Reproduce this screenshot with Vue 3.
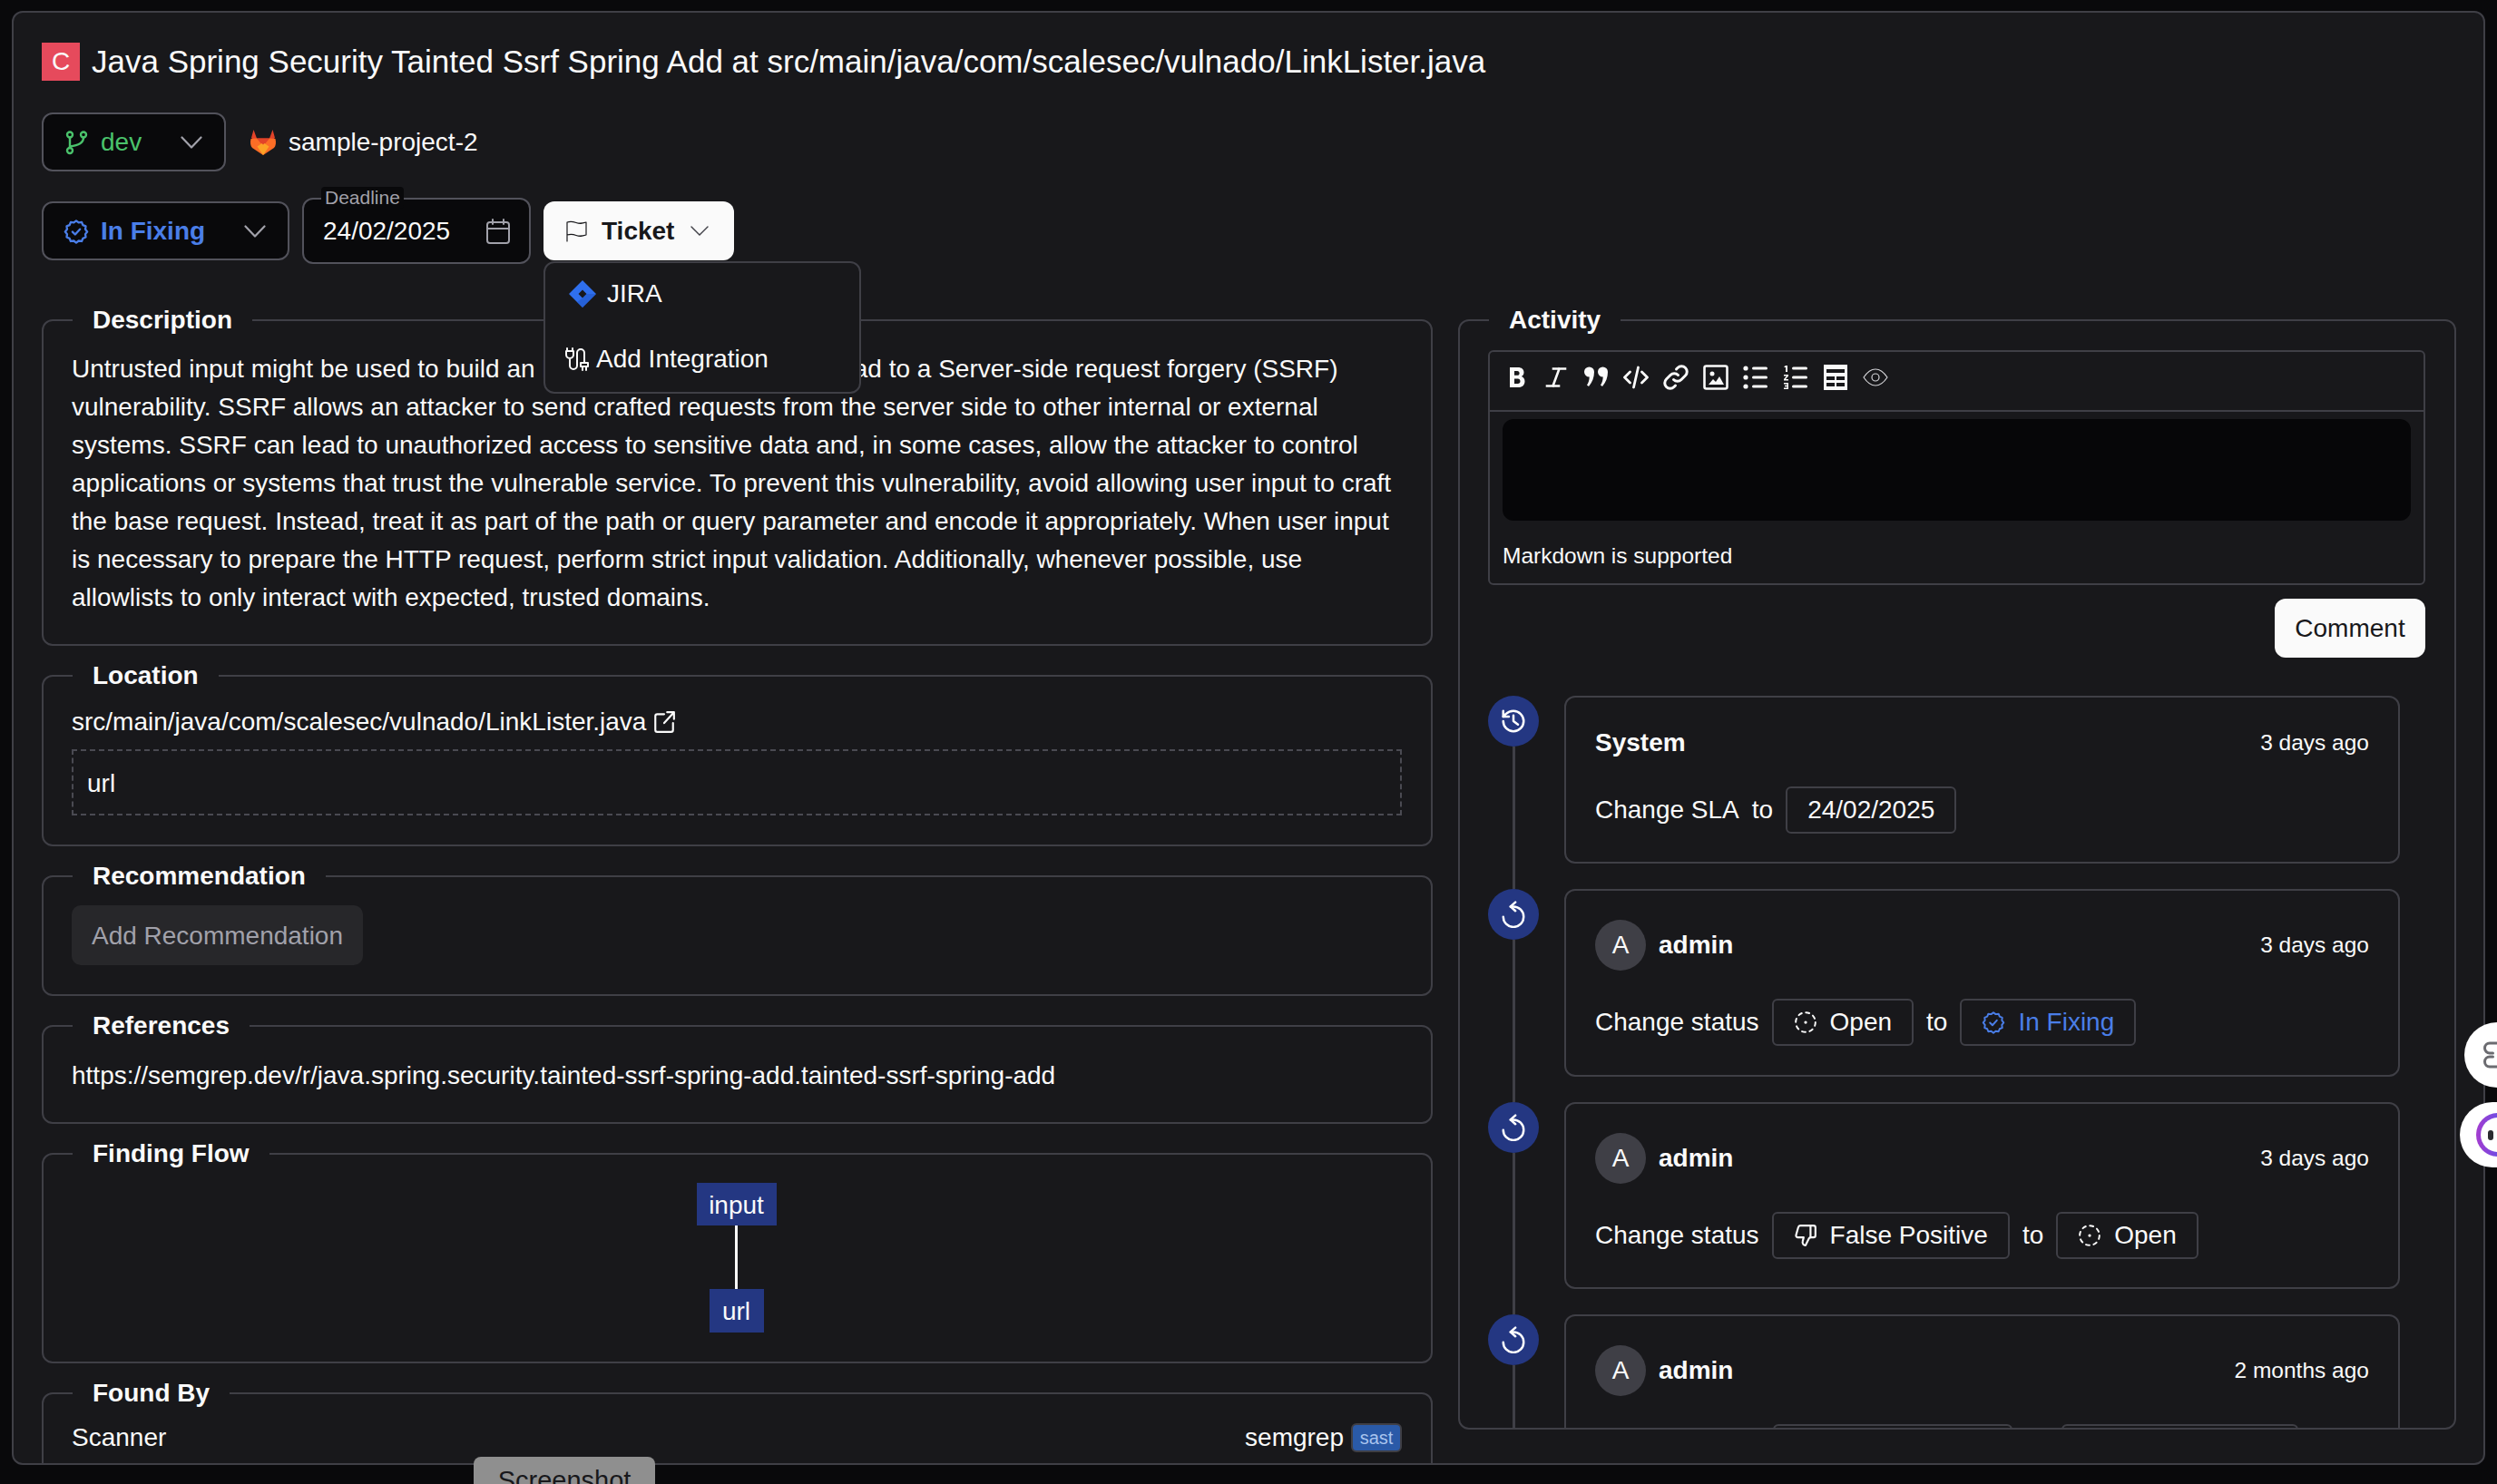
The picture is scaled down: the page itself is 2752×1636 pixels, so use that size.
<template>
  <div class="page">
    <div class="modal">
      <div class="title-row">
        <span class="severity">C</span>
        <h1>Java Spring Security Tainted Ssrf Spring Add at src/main/java/com/scalesec/vulnado/LinkLister.java</h1>
      </div>

      <div class="branch-row">
        <div class="select branch-select">
          <svg class="ico-md" viewBox="0 0 28 28" fill="none" stroke="#4ac26b" stroke-width="2.400" stroke-linecap="round" stroke-linejoin="round"><circle cx="7" cy="5.500" r="3"/><circle cx="22" cy="5.500" r="3"/><circle cx="7" cy="23" r="3"/><path d="M7 8.500V20"/><path d="M22 8.500c0 6-5 8.500-15 10"/></svg>
          <span class="branch-name">dev</span>
          <svg class="chevron" viewBox="0 0 24 14" fill="none" stroke="#a1a1aa" stroke-width="2.200" stroke-linecap="round" stroke-linejoin="round"><path d="m1.500 1.500 10.500 11 10.500-11"/></svg>
        </div>
        <div class="project">
          <svg class="gitlab" viewBox="0 0 30 30"><path fill="#e24329" d="M4.500 1 8 10.500H22L25.500 1 28 10 15 21 2 10Z"/><path fill="#fc6d26" d="M1.500 11 8 10.500 15 19V29L3 21C1 19 .5 15 1.500 11ZM28.500 11 22 10.500 15 19V29L27 21C29 19 29.500 15 28.500 11Z"/><path fill="#fca326" d="M8.500 19.500 15 15 21.500 19.500 15 29Z"/><path fill="#e24329" d="M8 10.500H22L15 17.500Z"/></svg>
          <span>sample-project-2</span>
        </div>
      </div>

      <div class="status-row">
        <div class="select status-select">
          <svg class="ico-md" viewBox="0 0 24 24" fill="none" stroke="#4a7ee8" stroke-width="2" stroke-linecap="round" stroke-linejoin="round"><path :d="badge"/><path d="m8.500 12.500 2.500 2.500 4.500-5"/></svg>
          <strong>In Fixing</strong>
          <svg class="chevron" viewBox="0 0 24 14" fill="none" stroke="#a1a1aa" stroke-width="2.200" stroke-linecap="round" stroke-linejoin="round"><path d="m1.500 1.500 10.500 11 10.500-11"/></svg>
        </div>
        <div class="deadline">
          <span class="deadline-label">Deadline</span>
          <span>24/02/2025</span>
          <svg class="ico-md" viewBox="0 0 28 28" fill="none" stroke="#a1a1aa" stroke-width="2" stroke-linecap="round" stroke-linejoin="round"><rect x="2" y="4" width="24" height="23" rx="3"/><path d="M8 1v5M20 1v5M2 11h24"/></svg>
        </div>
        <div class="ticket-wrap">
          <button type="button" class="ticket">
            <svg class="flag" viewBox="0 0 24 24" fill="none" stroke="#18181b" stroke-width="1.200" stroke-linecap="round" stroke-linejoin="round"><path d="M1 23V2c4-1.500 6-1 10 .5s6 1 11-.5v14c-5 1.500-7 2-11 .5s-6-1.500-10-.5"/></svg>
            <strong>Ticket</strong>
            <svg class="ticket-chevron" viewBox="0 0 20 12" fill="none" stroke="#3f3f46" stroke-width="1.400" stroke-linecap="round"><path d="m1 1 9 9 9-9"/></svg>
          </button>
          <div class="menu">
            <div class="menu-item jira-item">
              <svg class="jira" viewBox="0 0 30 30"><path fill="#2f6fed" d="M15 0 30 15 15 30 0 15ZM15 10.500 10.500 15 15 19.500 19.500 15Z" fill-rule="evenodd"/><path fill="#1f56c7" d="M15 19.500 19.500 15 30 15 15 30 9 24Z" opacity=".55"/></svg>
              <span>JIRA</span>
            </div>
            <div class="menu-item add-item">
              <svg class="plug" viewBox="0 0 26 26" fill="none" stroke="#fafafa" stroke-width="2" stroke-linecap="round" stroke-linejoin="round"><path d="M2 1v3M8 1v3M1 4h8v4a4 4 0 0 1-8 0ZM5 12v8a4 4 0 0 0 8 0V6a4 4 0 0 1 8 0v11"/><path d="M17 17h8v4h-8ZM19 21v4M23 21v4"/></svg>
              <span>Add Integration</span>
            </div>
          </div>
        </div>
      </div>

      <div class="columns">
        <div class="left-col">
          <fieldset class="box desc-box">
            <legend>Description</legend>
            <p>Untrusted input might be used to build an HTTP request, which can lead to a Server-side request forgery (SSRF) vulnerability. SSRF allows an attacker to send crafted requests from the server side to other internal or external systems. SSRF can lead to unauthorized access to sensitive data and, in some cases, allow the attacker to control applications or systems that trust the vulnerable service. To prevent this vulnerability, avoid allowing user input to craft the base request. Instead, treat it as part of the path or query parameter and encode it appropriately. When user input is necessary to prepare the HTTP request, perform strict input validation. Additionally, whenever possible, use allowlists to only interact with expected, trusted domains.</p>
          </fieldset>

          <fieldset class="box">
            <legend>Location</legend>
            <div class="file-link">
              <span>src/main/java/com/scalesec/vulnado/LinkLister.java</span>
              <svg class="ico-sm" viewBox="0 0 24 24" fill="none" stroke="#fafafa" stroke-width="2" stroke-linecap="round" stroke-linejoin="round"><path d="M12 4H5a2 2 0 0 0-2 2v14a2 2 0 0 0 2 2h14a2 2 0 0 0 2-2v-7"/><path d="M12 13 22 2M15 2h7v7"/></svg>
            </div>
            <div class="snippet">url</div>
          </fieldset>

          <fieldset class="box">
            <legend>Recommendation</legend>
            <button type="button" class="muted-btn">Add Recommendation</button>
          </fieldset>

          <fieldset class="box">
            <legend>References</legend>
            <div class="ref-line">https://semgrep.dev/r/java.spring.security.tainted-ssrf-spring-add.tainted-ssrf-spring-add</div>
          </fieldset>

          <fieldset class="box">
            <legend>Finding Flow</legend>
            <div class="flow">
              <span class="flow-node input-node">input</span>
              <span class="flow-edge"></span>
              <span class="flow-node url-node">url</span>
            </div>
          </fieldset>

          <fieldset class="box found-box">
            <legend>Found By</legend>
            <div class="found-row">
              <span>Scanner</span>
              <div class="found-right">
                <span>semgrep</span>
                <span class="sast">sast</span>
              </div>
            </div>
          </fieldset>
        </div>

        <fieldset class="box activity">
          <legend>Activity</legend>
          <div class="editor">
            <div class="toolbar">
              <svg class="tool" viewBox="0 0 28 28" fill="#fafafa"><path fill-rule="evenodd" d="M7 3h9c4 0 6.500 2.200 6.500 5.500 0 2-1 3.600-2.700 4.500 2.300.8 3.700 2.700 3.700 5.200C23.500 22.200 20.700 25 16.500 25H7ZM12 7v4.800h3.200c1.500 0 2.400-.9 2.400-2.400S16.700 7 15.200 7ZM12 15.500V21h3.800c1.700 0 2.700-1 2.700-2.700s-1-2.800-2.700-2.800Z"/></svg>
              <svg class="tool" viewBox="0 0 28 28" fill="none" stroke="#fafafa" stroke-width="2.600" stroke-linecap="square"><path d="M11 4.500h13M4 23.500h13M17.500 4.500l-7 19"/></svg>
              <svg class="tool" viewBox="0 0 28 28" fill="#fafafa"><path d="M1 8a5.500 5.500 0 1 1 11 0c0 6-2 11-6 16l-2-1.500c1.800-3 2.500-5 2.700-9A5.500 5.500 0 0 1 1 8ZM16 8a5.500 5.500 0 1 1 11 0c0 6-2 11-6 16l-2-1.500c1.800-3 2.500-5 2.700-9A5.500 5.500 0 0 1 16 8Z"/></svg>
              <svg class="tool" viewBox="0 0 28 28" fill="none" stroke="#fafafa" stroke-width="2.800" stroke-linecap="round" stroke-linejoin="round"><path d="M7.500 8 1.500 14l6 6M20.500 8l6 6-6 6M16.500 3l-5 22"/></svg>
              <svg class="tool" viewBox="0 0 28 28" fill="none" stroke="#fafafa" stroke-width="3" stroke-linecap="round" stroke-linejoin="round"><path d="M11.500 16.500a6 6 0 0 0 8.500 0l4.500-4.500a6 6 0 0 0-8.500-8.500l-1.500 1.500"/><path d="M16.500 11.500a6 6 0 0 0-8.500 0L3.500 16a6 6 0 0 0 8.500 8.500l1.500-1.500"/></svg>
              <svg class="tool" viewBox="0 0 28 28"><rect x="1.500" y="1.500" width="25" height="25" rx="2" fill="none" stroke="#fafafa" stroke-width="2.600"/><circle cx="10" cy="10" r="2.500" fill="#fafafa"/><path fill="#fafafa" d="M6 22l5-6 3 3 4-6 5 9Z"/></svg>
              <svg class="tool" viewBox="0 0 28 28" fill="#fafafa"><circle cx="3" cy="4" r="2.600"/><circle cx="3" cy="14" r="2.600"/><circle cx="3" cy="24" r="2.600"/><rect x="10" y="2.500" width="17" height="3" rx="1.500"/><rect x="10" y="12.500" width="17" height="3" rx="1.500"/><rect x="10" y="22.500" width="17" height="3" rx="1.500"/></svg>
              <svg class="tool" viewBox="0 0 28 28" fill="#fafafa"><path d="M3 1h2v7H3V3H1.500V2ZM1 11h5v1.500L3 16h3v1.500H1V16l3-3.500H1ZM1 20h5v7H1v-1.500h3.500v-1.300H2v-1.400h2.500v-1.300H1Z"/><rect x="10" y="2.500" width="17" height="3" rx="1.500"/><rect x="10" y="12.500" width="17" height="3" rx="1.500"/><rect x="10" y="22.500" width="17" height="3" rx="1.500"/></svg>
              <svg class="tool" viewBox="0 0 28 28"><path fill="#fafafa" fill-rule="evenodd" d="M1 0h26v28H1ZM4 5v4h20V5ZM4 13v4h9v-4ZM15 13v4h9v-4ZM4 20v4h9v-4ZM15 20v4h9v-4Z"/></svg>
              <svg class="tool" viewBox="0 0 28 28" fill="none" stroke="#d4d4d8" stroke-width="1.200"><path d="M1 14C5 8 9 5 14 5s9 3 13 9c-4 6-8 9-13 9S5 20 1 14Z"/><circle cx="14" cy="14" r="4"/></svg>
            </div>
            <div class="textarea"></div>
            <div class="md-hint">Markdown is supported</div>
          </div>

          <div class="comment-row">
            <button type="button" class="comment-btn">Comment</button>
          </div>

          <div class="timeline">
            <div v-for="entry in entries" :key="entry.id" class="tl-item">
              <div class="rail">
                <span class="tl-dot">
                  <svg v-if="entry.system" class="tl-icon" viewBox="0 0 24 24" fill="none" stroke="#fff" stroke-width="2" stroke-linecap="round" stroke-linejoin="round"><path d="M3 12a9 9 0 1 0 9-9 9.750 9.750 0 0 0-6.740 2.740L3 8"/><path d="M3 3v5h5"/><path d="M12 7v5l4 3"/></svg>
                  <svg v-else class="tl-icon" viewBox="0 0 28 28" fill="none" stroke="#fff" stroke-width="2.300" stroke-linecap="round" stroke-linejoin="round"><path d="M11 6h3a10.500 10.500 0 1 1-10.500 10.500"/><path d="M16 1.500 11 6l5 4.500"/></svg>
                </span>
                <span class="rail-line"></span>
              </div>
              <div class="tl-card" :class="entry.cardClass">
                <div class="tl-head">
                  <div class="tl-who">
                    <span v-if="!entry.system" class="avatar">A</span>
                    <strong>{{ entry.who }}</strong>
                  </div>
                  <span class="tl-time">{{ entry.when }}</span>
                </div>
                <div class="tl-body">
                  <span v-if="entry.system || entry.from" class="tl-action">{{ entry.action }}</span>
                  <span v-if="entry.system" class="chip">24/02/2025</span>
                  <template v-else-if="entry.from">
                    <span class="chip" :class="entry.from.cls">
                      <svg class="ico-sm" viewBox="0 0 24 24" v-html="icons[entry.from.icon]" fill="none" stroke-width="1.800" stroke-linecap="round" stroke-linejoin="round"></svg>
                      {{ entry.from.label }}
                    </span>
                    <span class="to">to</span>
                    <span class="chip" :class="entry.to.cls">
                      <svg class="ico-sm" viewBox="0 0 24 24" v-html="icons[entry.to.icon]" fill="none" stroke-width="1.800" stroke-linecap="round" stroke-linejoin="round"></svg>
                      {{ entry.to.label }}
                    </span>
                  </template>
                  <template v-else>
                    <span class="chip chip-a"></span>
                    <span class="chip chip-b"></span>
                  </template>
                </div>
              </div>
            </div>
          </div>
        </fieldset>
      </div>
    </div>

    <div class="side-btn side-top">
      <svg viewBox="0 0 15 30" fill="none" stroke="#6b6b70" stroke-width="3" stroke-linecap="round"><path d="M15 2H7a5.500 5.500 0 0 0 0 11h3.500M15 28H7a5.500 5.500 0 0 1 0-11h3.500"/></svg>
    </div>
    <div class="side-btn side-bottom">
      <span class="ring"><span class="ring-dot"></span></span>
    </div>
    <div class="screenshot-tab">Screenshot</div>
  </div>
</template>

<script setup>
const badge = 'M12 2l2.300 1.800 2.900-.4 1.100 2.700 2.700 1.100-.4 2.900L22.400 12.400l-1.800 2.300.4 2.900-2.700 1.100-1.100 2.700-2.900-.4L12 22.800l-2.300-1.800-2.900.4-1.100-2.700-2.700-1.100.4-2.900L1.600 12.400l1.800-2.300-.4-2.900 2.700-1.100 1.100-2.700 2.900.4Z'

const icons = {
  open: '<circle cx="12" cy="12" r="10" stroke="currentColor" stroke-dasharray="3.600 4.250"/><circle cx="12" cy="12" r="1.500" fill="currentColor" stroke="none"/>',
  fixing: `<path stroke="currentColor" d="${badge}"/><path stroke="currentColor" d="m8.500 12.500 2.500 2.500 4.500-5"/>`,
  falsePositive: '<g stroke="currentColor" stroke-width="2"><path d="M17 14V2"/><path d="M9 18.100 10 14H4.200a2 2 0 0 1-1.900-2.500l2.300-8A2 2 0 0 1 6.500 2H20a2 2 0 0 1 2 2v8a2 2 0 0 1-2 2h-2.800a2 2 0 0 0-1.800 1.100L12 22a3 3 0 0 1-3-3.900Z"/></g>'
}

const open = { label: 'Open', icon: 'open', cls: '' }
const fixing = { label: 'In Fixing', icon: 'fixing', cls: 'chip-blue' }
const falsePositive = { label: 'False Positive', icon: 'falsePositive', cls: '' }

const entries = [
  { id: 1, system: true, who: 'System', when: '3 days ago', action: 'Change SLA  to', cardClass: 'card-system' },
  { id: 2, who: 'admin', when: '3 days ago', action: 'Change status', from: open, to: fixing },
  { id: 3, who: 'admin', when: '3 days ago', action: 'Change status', from: falsePositive, to: open },
  { id: 4, who: 'admin', when: '2 months ago' }
]
</script>

<style scoped>
.page {
  position: relative;
  height: 1636px;
  overflow: hidden;
  padding: 12px 13px 0;
  box-sizing: border-box;
  font-family: "Liberation Sans", Arial, sans-serif;
  font-size: 28px;
  line-height: 42px;
  color: #fafafa;
}

.modal {
  height: 1603px;
  box-sizing: border-box;
  overflow: hidden;
  background: #18181b;
  border: 2px solid #3f3f46;
  border-radius: 12px;
  padding: 33px 31px 0;
}

.title-row {
  display: flex;
  align-items: center;
  gap: 13px;
  height: 42px;
}

.severity {
  width: 42px;
  height: 42px;
  display: grid;
  place-items: center;
  background: #e64a5c;
  font-size: 28px;
}

.title-row h1 {
  margin: 0;
  font-size: 35px;
  font-weight: 400;
  line-height: 42px;
  white-space: nowrap;
}

.branch-row {
  display: flex;
  align-items: center;
  gap: 26px;
  margin-top: 35px;
}

.select {
  display: flex;
  align-items: center;
  box-sizing: border-box;
  height: 65px;
  background: #09090b;
  border: 2px solid #52525b;
  border-radius: 12px;
}

.branch-select {
  width: 203px;
  padding: 0 24px 0 22px;
}

.branch-name {
  margin-left: 13px;
  color: #4ac26b;
}

.chevron {
  width: 24px;
  height: 14px;
  margin-left: auto;
}

.ico-md {
  width: 28px;
  height: 28px;
  flex: none;
}

.ico-sm {
  width: 26px;
  height: 26px;
  flex: none;
}

.project {
  display: flex;
  align-items: center;
  gap: 13px;
}

.gitlab {
  width: 30px;
  height: 30px;
}

.status-row {
  display: flex;
  gap: 14px;
  margin-top: 29px;
  height: 73px;
  align-items: flex-start;
}

.status-select {
  width: 273px;
  margin-top: 4px;
  padding: 0 24px 0 22px;
  color: #4a7ee8;
}

.status-select strong {
  margin-left: 13px;
  font-weight: 700;
}

.deadline {
  position: relative;
  display: flex;
  align-items: center;
  justify-content: space-between;
  box-sizing: border-box;
  width: 252px;
  height: 73px;
  padding: 0 20px 0 21px;
  background: #09090b;
  border: 2px solid #52525b;
  border-radius: 12px;
}

.deadline-label {
  position: absolute;
  left: 19px;
  top: -14px;
  padding: 0 4px;
  border-radius: 4px;
  background: #09090b;
  color: #a1a1aa;
  font-size: 21px;
  line-height: 24px;
}

.ticket-wrap {
  position: relative;
  margin-top: 4px;
}

.ticket {
  display: flex;
  align-items: center;
  width: 210px;
  height: 65px;
  padding: 0 26px 0 25px;
  box-sizing: border-box;
  border: none;
  border-radius: 12px;
  background: #fafafa;
  color: #18181b;
  font: inherit;
}

.flag {
  width: 24px;
  height: 24px;
}

.ticket strong {
  margin-left: 15px;
  font-weight: 700;
}

.ticket-chevron {
  width: 20px;
  height: 12px;
  margin-left: 18px;
}

.menu {
  position: absolute;
  left: 0;
  top: 66px;
  z-index: 5;
  box-sizing: border-box;
  width: 350px;
  height: 146px;
  background: #18181b;
  border: 2px solid #3f3f46;
  border-radius: 12px;
}

.menu-item {
  display: flex;
  align-items: center;
}

.jira-item {
  gap: 12px;
  padding: 13px 0 0 26px;
}

.jira {
  width: 30px;
  height: 30px;
}

.add-item {
  gap: 8px;
  padding: 30px 0 0 22px;
}

.plug {
  width: 26px;
  height: 26px;
}

.columns {
  display: grid;
  grid-template-columns: 1533px 1100px;
  gap: 28px;
  margin-top: 41px;
  align-items: start;
}

.left-col {
  display: flex;
  flex-direction: column;
  gap: 12px;
}

.box {
  margin: 0;
  min-width: 0;
  padding: 10px 32px 32px 31px;
  border: 2px solid #3f3f46;
  border-radius: 12px;
  box-sizing: border-box;
}

.box legend {
  margin-left: 1px;
  padding: 0 22px;
  font-weight: 700;
  line-height: 42px;
}

.desc-box p {
  margin: 2px 0 -2px;
}

.file-link {
  display: flex;
  align-items: center;
  gap: 7px;
  margin-top: 2px;
  line-height: 36px;
}

.snippet {
  box-sizing: border-box;
  height: 73px;
  margin-top: 12px;
  padding: 3px 15px 0;
  line-height: 66px;
  border: 2px dashed #4a4a52;
}

.muted-btn {
  display: block;
  width: 321px;
  height: 66px;
  margin-top: 1px;
  padding: 2px 0 0;
  border: none;
  border-radius: 10px;
  background: #27272a;
  color: #a1a1aa;
  font: inherit;
}

.ref-line {
  margin: 3px 0 -2px;
  white-space: nowrap;
}

.flow {
  display: flex;
  flex-direction: column;
  align-items: center;
  margin-top: 1px;
  padding-right: 1px;
}

.flow-node {
  display: grid;
  place-items: center;
  box-sizing: border-box;
  padding-top: 2px;
  background: #243782;
}

.input-node {
  width: 88px;
  height: 47px;
}

.url-node {
  width: 60px;
  height: 48px;
}

.flow-edge {
  width: 3px;
  height: 70px;
  background: #fafafa;
}

.found-box {
  padding-bottom: 80px;
}

.found-row {
  display: flex;
  align-items: center;
  justify-content: space-between;
  margin-top: -3px;
}

.found-right {
  display: flex;
  align-items: center;
  gap: 8px;
}

.sast {
  box-sizing: border-box;
  width: 56px;
  height: 32px;
  display: grid;
  place-items: center;
  background: #2a5aa8;
  border: 2px solid #3f3f46;
  border-radius: 6px;
  color: #a9c4ee;
  font-size: 20px;
  line-height: 26px;
}

.activity {
  height: 1244px;
  overflow: hidden;
  padding: 12px 32px 0 31px;
}

.editor {
  box-sizing: border-box;
  height: 259px;
  border: 2px solid #3f3f46;
  border-radius: 6px;
}

.toolbar {
  display: flex;
  align-items: center;
  gap: 16px;
  box-sizing: border-box;
  height: 66px;
  padding: 0 15px 8px;
  border-bottom: 2px solid #3f3f46;
}

.tool {
  width: 28px;
  height: 28px;
  flex: none;
}

.textarea {
  height: 112px;
  margin: 8px 14px 0;
  background: #060608;
  border-radius: 12px;
}

.md-hint {
  margin: 18px 14px 0;
  font-size: 24.500px;
  line-height: 42px;
}

.comment-row {
  display: flex;
  justify-content: flex-end;
  margin-top: 15px;
}

.comment-btn {
  width: 166px;
  height: 65px;
  border: none;
  border-radius: 12px;
  background: #fafafa;
  color: #18181b;
  font: inherit;
}

.timeline {
  margin-top: 42px;
  padding-right: 28px;
}

.tl-item {
  display: flex;
  gap: 28px;
}

.rail {
  display: flex;
  flex-direction: column;
  align-items: center;
  width: 56px;
  flex: none;
}

.tl-dot {
  width: 56px;
  height: 56px;
  flex: none;
  display: grid;
  place-items: center;
  border-radius: 50%;
  background: #243782;
}

.tl-icon {
  width: 30px;
  height: 30px;
}

.rail-line {
  width: 3px;
  flex: 1;
  background: #3f3f46;
}

.tl-card {
  flex: 1;
  box-sizing: border-box;
  height: 206.500px;
  margin-bottom: 28px;
  padding: 32px 32px 0;
  border: 2px solid #3f3f46;
  border-radius: 12px;
}

.card-system {
  height: 185px;
}

.tl-head {
  display: flex;
  align-items: center;
  justify-content: space-between;
  height: 56px;
}

.card-system .tl-head {
  height: 36px;
}

.tl-who {
  display: flex;
  align-items: center;
  gap: 14px;
}

.tl-who strong {
  font-weight: 700;
}

.avatar {
  width: 56px;
  height: 56px;
  display: grid;
  place-items: center;
  border-radius: 50%;
  background: #3f3f46;
}

.tl-time {
  font-size: 24.500px;
}

.tl-body {
  display: flex;
  align-items: center;
  gap: 14px;
  margin-top: 31px;
}

.card-system .tl-body {
  margin-top: 30px;
}

.tl-action {
  white-space: pre;
}

.chip {
  display: inline-flex;
  align-items: center;
  gap: 14px;
  box-sizing: border-box;
  height: 52px;
  padding: 0 22px;
  border: 2px solid #3f3f46;
  border-radius: 6px;
  color: #fafafa;
}

.chip-blue {
  color: #4a7ee8;
}

.chip-a {
  width: 264px;
  margin-left: 196px;
}

.chip-b {
  width: 261px;
  margin-left: 40px;
}

.side-btn {
  position: absolute;
  display: grid;
  place-items: center start;
  width: 80px;
  height: 72px;
  border-radius: 36px 0 0 36px;
  background: #fff;
}

.side-top {
  left: 2716px;
  top: 1127px;
}

.side-top svg {
  width: 15px;
  height: 30px;
  margin-left: 21px;
}

.side-bottom {
  left: 2711px;
  top: 1215px;
}

.ring {
  display: grid;
  place-items: center start;
  box-sizing: border-box;
  width: 48px;
  height: 48px;
  margin-left: 18px;
  border: 5px solid transparent;
  border-radius: 50%;
  background: linear-gradient(#fff, #fff) padding-box, linear-gradient(90deg, #a43ccf, #3d5cf5) border-box;
}

.ring-dot {
  width: 6px;
  height: 11px;
  margin-left: 8px;
  border-radius: 3px;
  background: #2b2b30;
}

.screenshot-tab {
  position: absolute;
  left: 522px;
  top: 1606px;
  width: 200px;
  height: 50px;
  text-align: center;
  padding-top: 6px;
  border-radius: 8px 8px 0 0;
  background: #8f8f8f;
  color: #18181b;
  font-size: 29px;
  line-height: 40px;
}
</style>

<style>
body {
  background: #09090b;
}
</style>
